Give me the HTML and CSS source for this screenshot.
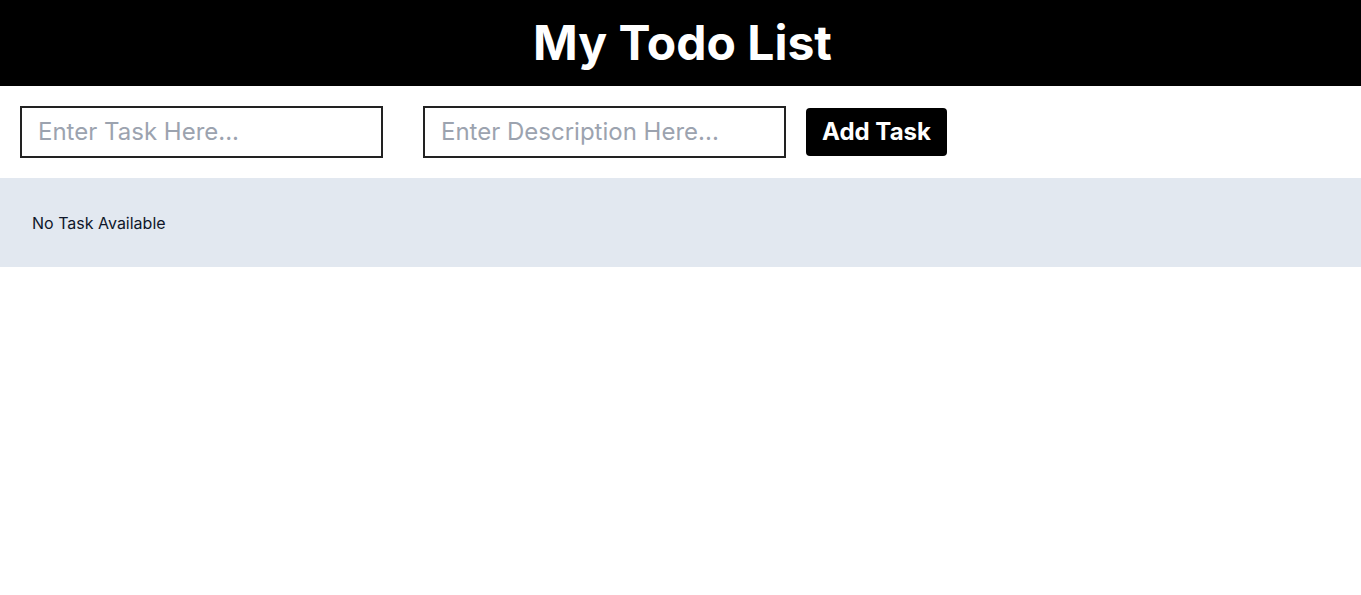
FILE: index.html
```html
<!DOCTYPE html>
<html lang="en">
<head>
<meta charset="utf-8">
<title>My Todo List</title>
<link rel="stylesheet" href="styles.css">
</head>
<body>
<header class="top">
  <h1 class="title">My Todo List</h1>
</header>
<form class="entry" onsubmit="return false;">
  <input class="field" type="text" placeholder="Enter Task Here...">
  <input class="field" type="text" placeholder="Enter Description Here...">
  <button class="add" type="submit">Add Task</button>
</form>
<section class="tasks">
  <p class="empty">No Task Available</p>
</section>
</body>
</html>
```
FILE: styles.css
```css
* { box-sizing: border-box; }
html, body { margin: 0; padding: 0; }
body {
  font-family: Inter, "Noto Sans", sans-serif;
  background: #fff;
  color: #000;
}
.top {
  background: #000;
  height: 86px;
  display: flex;
  align-items: center;
  justify-content: center;
  padding-left: 4px;
}
.title {
  margin: 0;
  color: #fff;
  font-size: 48px;
  line-height: 1;
  font-weight: 700;
}
.entry {
  display: flex;
  align-items: center;
  height: 92px;
}
.field {
  width: 363px;
  height: 52px;
  margin: 0 20px;
  border: 2px solid #222;
  padding: 0 16px 2px;
  font-family: Inter, sans-serif;
  font-size: 24px;
  color: #111;
  outline: none;
  border-radius: 0;
}
.field::placeholder { color: #9ca3af; }
.field + .field { margin-left: 20px; margin-right: 0; }
.add {
  margin-left: 20px;
  height: 48px;
  width: 141px;
  background: #000;
  color: #fff;
  border: none;
  border-radius: 4px;
  font-family: Inter, sans-serif;
  font-weight: 700;
  font-size: 24px;
  padding: 0 0 2px;
}
.tasks {
  background: #e2e8f0;
  height: 89px;
  padding: 33px 32px;
}
.empty {
  margin: 0;
  font-size: 16px;
  line-height: 24px;
  color: #0f172a;
}
```
